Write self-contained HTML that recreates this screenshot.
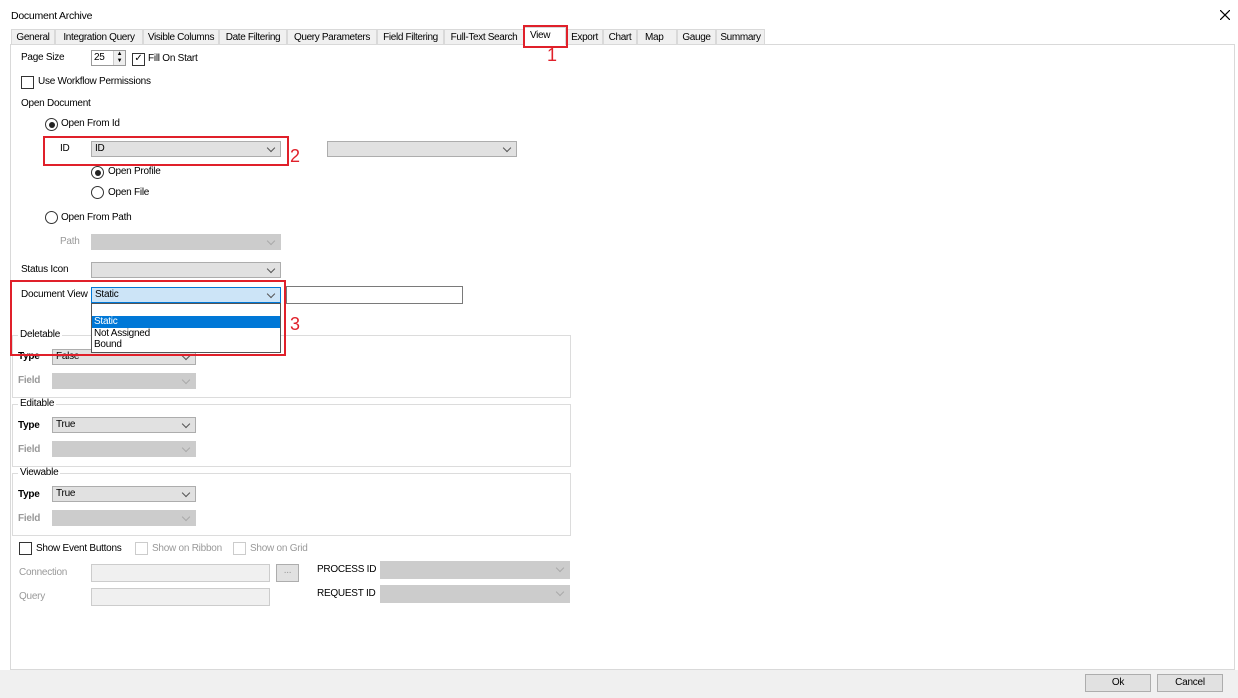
<!DOCTYPE html>
<html><head><style>
body{margin:0;width:1238px;height:698px;background:#fff;font-family:"Liberation Sans",sans-serif;font-size:10px;letter-spacing:-0.25px;color:#000;position:relative;overflow:hidden}
.a{position:absolute;white-space:nowrap}
.tab{position:absolute;top:29px;height:15px;border:1px solid #d9d9d9;border-bottom:none;background:#f0f0f0;line-height:15px;text-align:center;box-sizing:border-box;white-space:nowrap;overflow:hidden;letter-spacing:-0.35px}
.cb{position:absolute;height:16px;border:1px solid #adadad;background:#e1e1e1;box-sizing:border-box;line-height:14px;padding-left:3px}
.cb.d{background:#ccc;border-color:#ccc}
.cb::after{content:"";position:absolute;right:6px;top:3px;width:5px;height:5px;border-right:1px solid #555;border-bottom:1px solid #555;transform:rotate(45deg)}
.cb.d::after{border-color:#aaa}
.chk{position:absolute;width:11px;height:11px;border:1px solid #333;background:#fff}
.rad{position:absolute;width:11px;height:11px;border:1px solid #333;border-radius:50%;background:#fff}
.rad.on::after{content:"";position:absolute;left:2.5px;top:2.5px;width:6px;height:6px;border-radius:50%;background:#222}
.grp{position:absolute;border:1px solid #dcdcdc}
.red{position:absolute;border:2px solid #e0202a}
.num{position:absolute;color:#e0202a;font-size:18px}
.g{color:#999}
.btn{position:absolute;border:1px solid #adadad;background:#e1e1e1;text-align:center;line-height:16px;box-sizing:border-box;height:18px}
.lg{background:#fff;padding:0 2px}
</style></head><body>
<div class="a" style="left:11px;top:10px;font-size:10.5px">Document Archive</div>
<svg style="position:absolute;left:1220px;top:10px" width="10" height="10"><path d="M0 0L10 10M10 0L0 10" stroke="#000" stroke-width="1.2"/></svg>
<div style="position:absolute;left:10px;top:44px;width:1223px;height:624px;border:1px solid #d9d9d9;background:#fff"></div>
<div style="position:absolute;left:0;top:670px;width:1238px;height:28px;background:#f0f0f0"></div>
<div class="tab" style="left:11px;width:44px">General</div>
<div class="tab" style="left:55px;width:88px">Integration Query</div>
<div class="tab" style="left:143px;width:76px">Visible Columns</div>
<div class="tab" style="left:219px;width:68px">Date Filtering</div>
<div class="tab" style="left:287px;width:90px">Query Parameters</div>
<div class="tab" style="left:377px;width:67px">Field Filtering</div>
<div class="tab" style="left:444px;width:80px">Full-Text Search</div>
<div class="tab" style="left:524px;width:42px;top:27px;height:18px;background:#fff;line-height:16px;text-align:left;padding-left:5px">View</div>
<div class="tab" style="left:566px;width:37px">Export</div>
<div class="tab" style="left:603px;width:34px">Chart</div>
<div class="tab" style="left:637px;width:40px;text-align:left;padding-left:7px">Map</div>
<div class="tab" style="left:677px;width:39px">Gauge</div>
<div class="tab" style="left:716px;width:49px">Summary</div>
<div class="red" style="left:523px;top:25px;width:41px;height:19px"></div>
<div class="num" style="left:547px;top:45px">1</div>

<div class="a" style="left:21px;top:52px">Page Size</div>
<div style="position:absolute;left:91px;top:50px;width:35px;height:16px;border:1px solid #999;box-sizing:border-box;background:#fff"><span style="position:absolute;left:2px;top:1px">25</span><span style="position:absolute;right:0;top:0;width:11px;height:14px;border-left:1px solid #ccc;background:#eee;font-size:6px;line-height:7px;text-align:center">▲<br>▼</span></div>
<div class="chk" style="left:132px;top:53px;font-size:10px;line-height:10px;text-align:center">✓</div>
<div class="a" style="left:148px;top:53px">Fill On Start</div>
<div class="chk" style="left:21px;top:76px"></div>
<div class="a" style="left:38px;top:76px">Use Workflow Permissions</div>
<div class="a" style="left:21px;top:98px">Open Document</div>
<div class="rad on" style="left:45px;top:118px"></div>
<div class="a" style="left:61px;top:118px">Open From Id</div>
<div class="a" style="left:60px;top:143px">ID</div>
<div class="cb" style="left:91px;top:141px;width:190px">ID</div>
<div class="red" style="left:43px;top:136px;width:242px;height:26px"></div>
<div class="num" style="left:290px;top:146px">2</div>
<div class="cb" style="left:327px;top:141px;width:190px"></div>
<div class="rad on" style="left:91px;top:166px"></div>
<div class="a" style="left:108px;top:166px">Open Profile</div>
<div class="rad" style="left:91px;top:186px"></div>
<div class="a" style="left:108px;top:187px">Open File</div>
<div class="rad" style="left:45px;top:211px"></div>
<div class="a" style="left:61px;top:212px">Open From Path</div>
<div class="a g" style="left:60px;top:236px">Path</div>
<div class="cb d" style="left:91px;top:234px;width:190px"></div>
<div class="a" style="left:21px;top:264px">Status Icon</div>
<div class="cb" style="left:91px;top:262px;width:190px"></div>
<div class="a" style="left:21px;top:289px">Document View</div>
<div class="cb" style="left:91px;top:287px;width:190px;background:#cce4f7;border-color:#0078d7">Static</div>
<div style="position:absolute;left:286px;top:286px;width:177px;height:18px;border:1px solid #7a7a7a;box-sizing:border-box;background:#fff"></div>
<div class="grp" style="left:12px;top:335px;width:557px;height:61px"></div>
<div class="a lg" style="left:18px;top:329px">Deletable</div>
<div class="a" style="left:18px;top:351px;font-weight:bold">Type</div>
<div class="cb" style="left:52px;top:349px;width:144px">False</div>
<div class="a g" style="left:18px;top:375px;font-weight:bold">Field</div>
<div class="cb d" style="left:52px;top:373px;width:144px"></div>
<div style="position:absolute;left:91px;top:303px;width:190px;height:50px;border:1px solid #555;box-sizing:border-box;background:#fff;line-height:11.5px">
<div style="height:12px"></div><div style="background:#0078d7;color:#fff;padding-left:2px">Static</div><div style="padding-left:2px">Not Assigned</div><div style="padding-left:2px">Bound</div></div>
<div class="red" style="left:10px;top:280px;width:272px;height:72px"></div>
<div class="num" style="left:290px;top:314px">3</div>

<div class="grp" style="left:12px;top:404px;width:557px;height:61px"></div>
<div class="a lg" style="left:18px;top:398px">Editable</div>
<div class="a" style="left:18px;top:420px;font-weight:bold">Type</div>
<div class="cb" style="left:52px;top:417px;width:144px">True</div>
<div class="a g" style="left:18px;top:444px;font-weight:bold">Field</div>
<div class="cb d" style="left:52px;top:441px;width:144px"></div>
<div class="grp" style="left:12px;top:473px;width:557px;height:61px"></div>
<div class="a lg" style="left:18px;top:467px">Viewable</div>
<div class="a" style="left:18px;top:489px;font-weight:bold">Type</div>
<div class="cb" style="left:52px;top:486px;width:144px">True</div>
<div class="a g" style="left:18px;top:513px;font-weight:bold">Field</div>
<div class="cb d" style="left:52px;top:510px;width:144px"></div>

<div class="chk" style="left:19px;top:542px"></div>
<div class="a" style="left:36px;top:543px">Show Event Buttons</div>
<div class="chk" style="left:135px;top:542px;border-color:#ccc"></div>
<div class="a g" style="left:152px;top:543px">Show on Ribbon</div>
<div class="chk" style="left:233px;top:542px;border-color:#ccc"></div>
<div class="a g" style="left:250px;top:543px">Show on Grid</div>
<div class="a g" style="left:19px;top:567px">Connection</div>
<div style="position:absolute;left:91px;top:564px;width:179px;height:18px;border:1px solid #ccc;background:#f0f0f0;box-sizing:border-box"></div>
<div class="btn" style="left:276px;top:564px;width:23px;color:#999;line-height:12px">...</div>
<div class="a g" style="left:19px;top:591px">Query</div>
<div style="position:absolute;left:91px;top:588px;width:179px;height:18px;border:1px solid #ccc;background:#f0f0f0;box-sizing:border-box"></div>
<div class="a" style="left:317px;top:564px">PROCESS ID</div>
<div class="cb d" style="left:380px;top:561px;width:190px;height:18px"></div>
<div class="a" style="left:317px;top:588px">REQUEST ID</div>
<div class="cb d" style="left:380px;top:585px;width:190px;height:18px"></div>

<div class="btn" style="left:1085px;top:674px;width:66px">Ok</div>
<div class="btn" style="left:1157px;top:674px;width:66px">Cancel</div>
</body></html>
